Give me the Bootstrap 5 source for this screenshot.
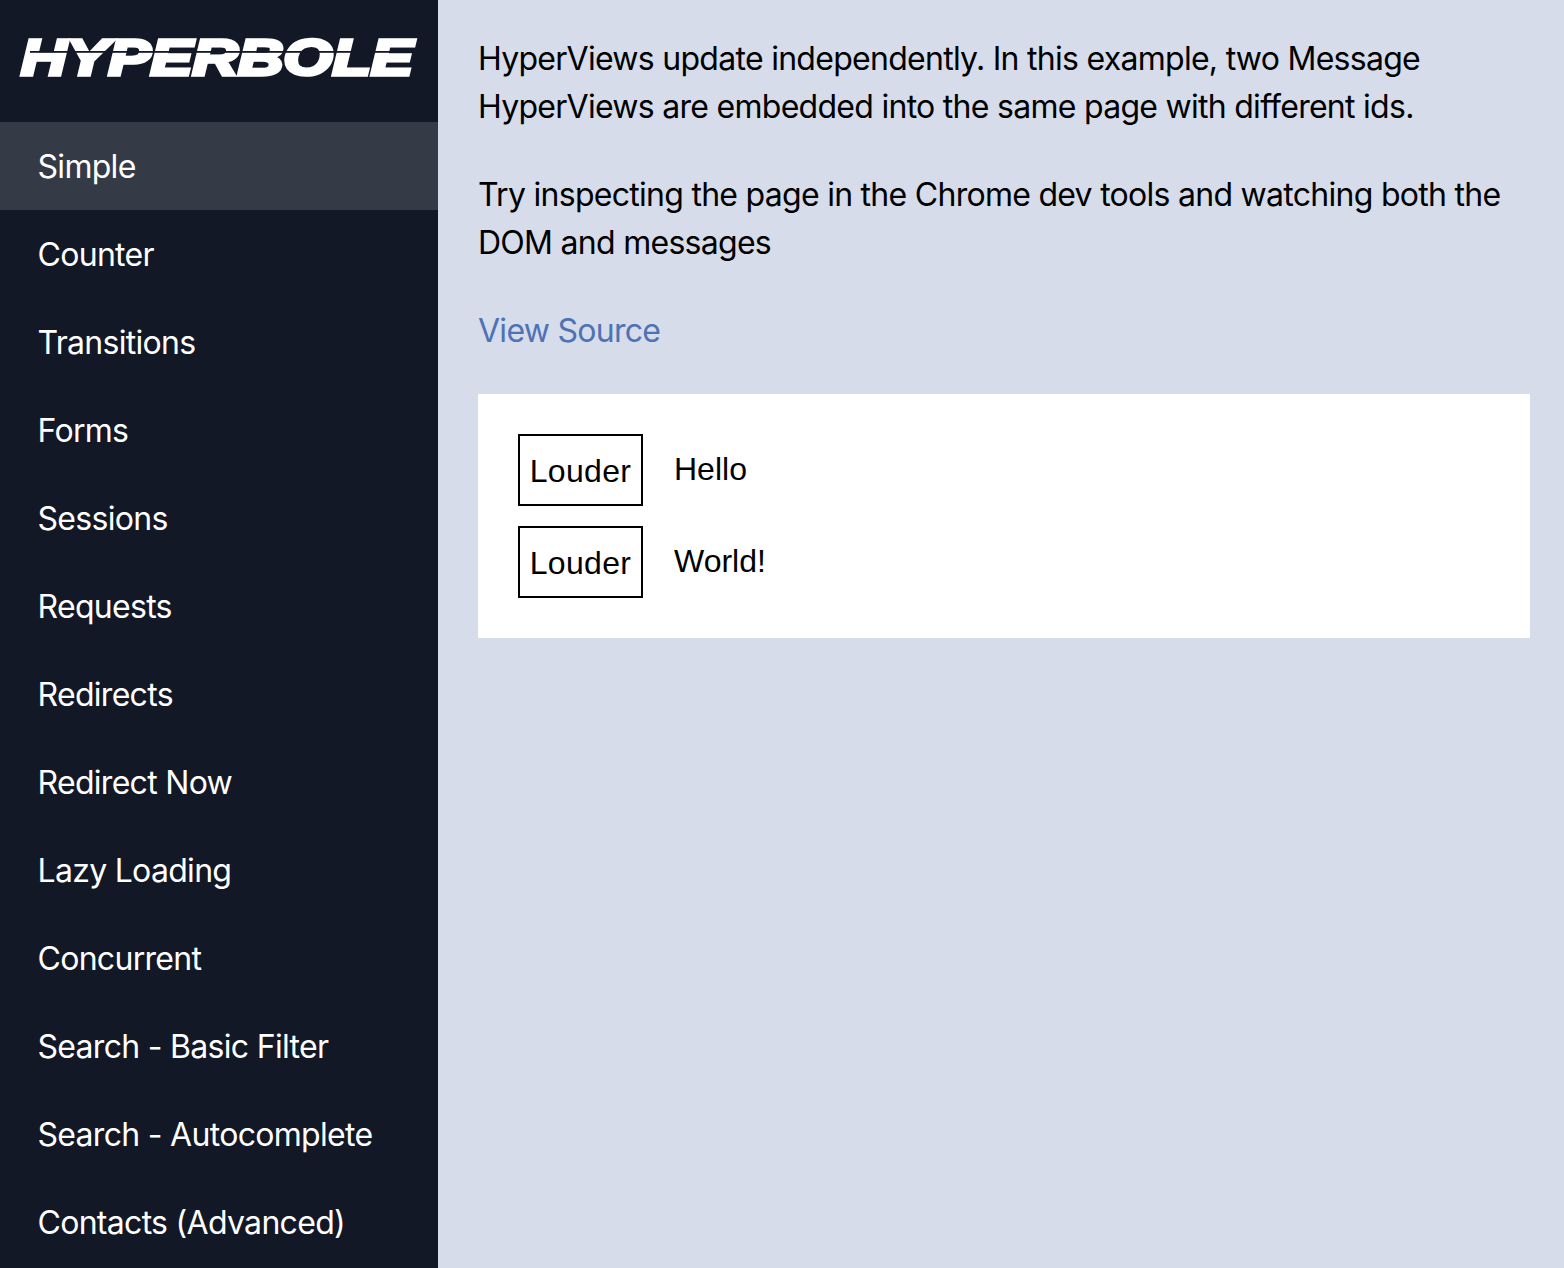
<!DOCTYPE html>
<html lang="en">
<head>
<meta charset="utf-8">
<title>Hyperbole</title>
<link href="https://cdn.jsdelivr.net/npm/bootstrap@5.3.0/dist/css/bootstrap.min.css" rel="stylesheet">
<style>
html, body { height: 100%; }
body { background: #d6dce9; color: #000; font-family: "Inter", sans-serif; font-size: 32px; line-height: 48px; letter-spacing: -0.72px; overflow: hidden; }
.shell { height: 1268px; }
.side { width: 438px; background: #131827; }
.logo-box { height: 122px; }
.logo-svg { display: block; }
.logo-word { fill: #fff; stroke: #fff; stroke-width: 3.6px; font-family: "Liberation Sans", sans-serif; font-weight: 700; font-style: italic; font-size: 50px; letter-spacing: 0; }
.logo-slit { fill: #131827; }
.side-link { display: block; height: 88px; line-height: 90px; padding-left: 37.5px; color: #fff; letter-spacing: -0.7px; text-decoration: none; white-space: nowrap; }
.side-link.on { background: #343a46; }
.main-pane { padding: 35px 34px 0 40px; }
.para { margin: 0 0 40px; }
.src { color: #4e72b5; text-decoration: none; }
.demo { background: #fff; padding: 40px; margin-top: 39px; gap: 20px; font-family: "Liberation Sans", sans-serif; letter-spacing: 0; }
.demo-row { gap: 31px; }
.loud { width: 125px; height: 72px; border: 2px solid #000; background: #fff; color: #000; font: inherit; letter-spacing: .3px; padding: 0; line-height: 70px; }
.msg { line-height: 70px; }
</style>
</head>
<body>
<div class="d-flex shell">
  <nav class="side flex-shrink-0 overflow-hidden">
    <div class="logo-box">
      <svg class="logo-svg" width="438" height="122" viewBox="0 0 438 122">
        <text class="logo-word" x="21" y="75" textLength="392" lengthAdjust="spacingAndGlyphs">HYPERBOLE</text>
        <rect class="logo-slit" x="30" y="51" width="384" height="1.8"/>
      </svg>
    </div>
    <a class="side-link on" href="#">Simple</a>
    <a class="side-link" href="#">Counter</a>
    <a class="side-link" href="#">Transitions</a>
    <a class="side-link" href="#">Forms</a>
    <a class="side-link" href="#">Sessions</a>
    <a class="side-link" href="#">Requests</a>
    <a class="side-link" href="#">Redirects</a>
    <a class="side-link" href="#">Redirect Now</a>
    <a class="side-link" href="#">Lazy Loading</a>
    <a class="side-link" href="#">Concurrent</a>
    <a class="side-link" href="#">Search - Basic Filter</a>
    <a class="side-link" href="#">Search - Autocomplete</a>
    <a class="side-link" href="#">Contacts (Advanced)</a>
  </nav>
  <main class="main-pane flex-grow-1">
    <p class="para">HyperViews update independently. In this example, two Message HyperViews are embedded into the same page with different ids.</p>
    <p class="para">Try inspecting the page in the Chrome dev tools and watching both the DOM and messages</p>
    <a class="src" href="#">View Source</a>
    <div class="demo d-flex flex-column">
      <div class="demo-row d-flex align-items-start"><button class="loud" type="button">Louder</button><span class="msg">Hello</span></div>
      <div class="demo-row d-flex align-items-start"><button class="loud" type="button">Louder</button><span class="msg">World!</span></div>
    </div>
  </main>
</div>
<script src="https://cdn.jsdelivr.net/npm/bootstrap@5.3.0/dist/js/bootstrap.bundle.min.js"></script>
</body>
</html>
